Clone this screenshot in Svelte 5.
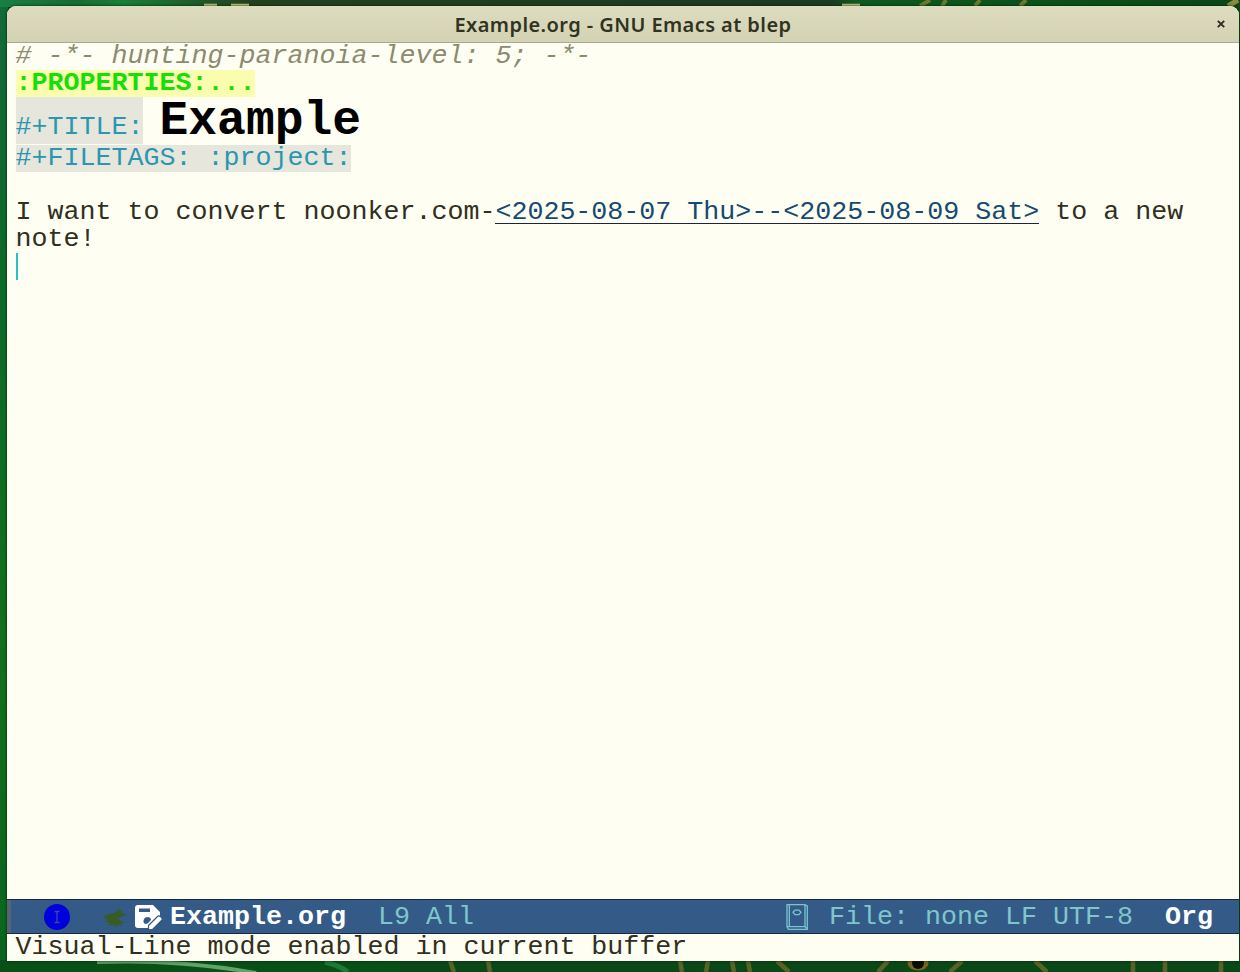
<script>
  const link = '<2025-08-07 Thu>--<2025-08-09 Sat>';
</script>

<div class="desktop">
  <svg class="wallpaper" viewBox="0 0 1240 972" aria-hidden="true">
    <defs>
      <linearGradient id="left" x1="0" y1="0" x2="0" y2="1">
        <stop offset="0" stop-color="#12693a" /><stop offset=".3" stop-color="#0e6a28" />
        <stop offset=".7" stop-color="#12701c" /><stop offset="1" stop-color="#0a6420" />
      </linearGradient>
      <linearGradient id="top">
        <stop offset="0" stop-color="#188044" /><stop offset=".06" stop-color="#176b34" />
        <stop offset=".1" stop-color="#188038" /><stop offset=".2" stop-color="#24401f" />
        <stop offset=".67" stop-color="#1d3a22" /><stop offset=".69" stop-color="#0e5a20" />
        <stop offset="1" stop-color="#0a4616" />
      </linearGradient>
    </defs>
    <rect width="1240" height="972" fill="#0b4818" />
    <rect width="8" height="972" fill="url(#left)" />
    <rect width="1240" height="7" fill="url(#top)" />
    <path d="M204 5h13M231 5h18M842 5h18" stroke="#c8c47c" stroke-width="2.5" />
    <path d="M930 0l-10 6M946 0l-4 6M980 0l-5 6M1026 0l-6 6" stroke="#6c7a30" stroke-width="4" />
    <path d="M0 966h400" stroke="#085018" stroke-width="12" />
    <path d="M97 962Q180 959 256 973" fill="none" stroke="#62a368" stroke-width="4" />
    <path d="M325 962Q338 965 348 972" fill="none" stroke="#1c7a38" stroke-width="5" />
    <path d="M450 961l4 11M488 961l2 11M680 961l2 11M708 961l-2 11M732 961l2 11M748 961l2 11M777 961l12 11M888 961l-10 11M962 961l-12 11M1035 961l12 11M1133 961v11M1165 961v11M1221 961v11" fill="none" stroke="#5b6224" stroke-width="4.5" />
    <ellipse cx="918" cy="963" rx="10.5" ry="7.5" fill="#7c6420" /><circle cx="918" cy="963" r="6" fill="#080d05" />
    <path d="M1228 6l10-6" stroke="#8b8b40" stroke-width="5" />
  </svg>
  <main class="window">
    <header>
      <h1>Example.org - GNU Emacs at blep</h1>
      <button aria-label="Close"><svg viewBox="0 0 8 8"><path d="M.8.8l6.4 6.4M7.2.8L.8 7.2" /></svg></button>
    </header>
    <section class="buffer">
      <div class="line comment"># -*- hunting-paranoia-level: 5; -*-</div>
      <div class="line"><span class="drawer">:PROPERTIES:...</span></div>
      <div class="title-row"><span class="meta keyword">#+TITLE:</span><span class="title">Example</span></div>
      <div class="line"><span class="meta">#+FILETAGS: :project:</span></div>
      <div class="line"></div>
      <div class="line">I want to convert noonker.com-<span class="date">{link}</span> to a new</div>
      <div class="line">note!</div>
      <div class="line"><span class="cursor"></span></div>
    </section>
    <footer class="modeline">
      <span class="bar"></span>
      <svg class="state" viewBox="0 0 26 26"><circle cx="13" cy="13" r="13" fill="#0000dc" /><path d="M10.5 7.5h5M13 7.5v11M10.5 18.5h5" fill="none" stroke="#4540b0" stroke-width="1.3" /></svg>
      <svg class="bird" viewBox="0 0 26 24"><path d="M2 11C6 8 10 9 13 7L17 2V6L20 4L19 8L25 9L20 12L15 13L17 15L24 18L19 18L20 21L15 20L13 23L11 20L5 21L7 18L2 17L5 15L1 13Z" fill="#375c28" /></svg>
      <svg class="save" viewBox="0 0 28 26"><path fill-rule="evenodd" d="M3 1H18L25 8V12L15 21V24H3Q0 24 0 21V4Q0 1 3 1ZM4 4.5V8H15V4.5ZM12 13A4 4 0 0 0 9 19Q11 21 13 19L16 16Q16 13 12 13Z" fill="#fff" /><path d="M13.5 21.5L22.5 12.5Q24 11.2 25.5 12.7L26.5 13.7Q28 15.2 26.5 16.5L17.5 25.5H13.5Z" fill="#fff" stroke="#345b87" stroke-width="1.2" /></svg>
      <b class="file">Example.org</b>
      <span class="pos">L9 All</span>
      <svg class="book" viewBox="0 0 22 26"><path d="M1 .7h18v22H1zM1 22.7l1.5 2.6H21.3V2L19 .7M3.3 .7v22M19 22.7l2.3 2.4" /><path d="M7 8.3l2-2.2h4l2 2.2-2 2.4H9z" /></svg>
      <span class="info">File: none LF UTF-8</span>
      <b class="mode">Org</b>
    </footer>
    <div class="echo line">Visual-Line mode enabled in current buffer</div>
  </main>
</div>

<style>
  :global(body) { margin: 0; overflow: hidden; }
  .desktop { position: relative; box-sizing: border-box; width: 1240px; height: 972px; padding: 6px 1px 11px 7px; overflow: hidden; }
  .wallpaper { position: absolute; inset: 0; width: 1240px; height: 972px; }
  .window { position: relative; box-sizing: border-box; display: flex; flex-direction: column; height: 955px; overflow: hidden; border-radius: 9px 9px 0 0; background: #fefef3; color: #30301c; font: 26.667px/27px "Liberation Mono", monospace; box-shadow: 0 0 3px #001f08; }
  header { box-sizing: border-box; flex: 0 0 37px; display: grid; grid-template-columns: 36px 1fr 36px; align-items: center; background: linear-gradient(#dedcbf, #d3d2b3); border-bottom: 1px solid #aaa899; }
  h1 { grid-column: 2; margin: 0; padding-top: 2px; text-align: center; font: 600 20px/34px "Noto Sans", sans-serif; letter-spacing: .42px; color: #30331f; white-space: pre; }
  button { display: flex; justify-content: center; padding: 0; border: 0; background: none; }
  button svg { width: 8px; height: 8px; fill: none; stroke: #2c2d1f; stroke-width: 1.9; }
  .buffer { flex: 1; padding-left: 8.5px; }
  .line { height: 27px; white-space: pre; }
  .comment { color: #8b8b6e; font-style: italic; }
  .drawer { display: inline-block; height: 27px; background: #fbfdae; color: #14df06; font-weight: 700; }
  .title-row { display: flex; height: 48px; }
  .meta { display: inline-block; height: 27px; background: #e6e6dc; color: #2c96b0; }
  .keyword { height: 47px; line-height: 60px; }
  .title { padding-left: 16px; color: #000; font: 700 48px/49px "Liberation Mono", monospace; }
  .date { color: #164a6e; box-shadow: 0 1px #1c2440; display: inline-block; height: 24px; }
  .cursor { display: block; width: 2px; height: 27px; background: #25c3c3; }
  .modeline { box-sizing: border-box; height: 35px; display: flex; align-items: center; flex-shrink: 0; border: solid #172b40; border-width: 1px 0; background: #345b87; color: #7fc6cc; line-height: 33px; white-space: pre; }
  .modeline svg { flex: none; }
  .modeline > b, .pos, .info { padding-top: 2px; line-height: 31px; }
  .bar { width: 4px; height: 33px; background: #576275; }
  .state { width: 26px; height: 26px; margin-left: 33px; }
  .bird { width: 25px; height: 24px; margin-left: 33px; }
  .save { width: 28px; height: 26px; margin-left: 7px; }
  .file { margin-left: 7px; color: #fff; }
  .pos { margin-left: 32px; }
  .book { width: 22px; height: 26px; margin-left: auto; fill: none; stroke: #78c5d0; stroke-width: 1.3; }
  .info { margin-left: 21px; }
  .mode { margin: 0 26px 0 32px; color: #fff; }
  .echo { padding-left: 8.5px; flex: none; }
</style>
